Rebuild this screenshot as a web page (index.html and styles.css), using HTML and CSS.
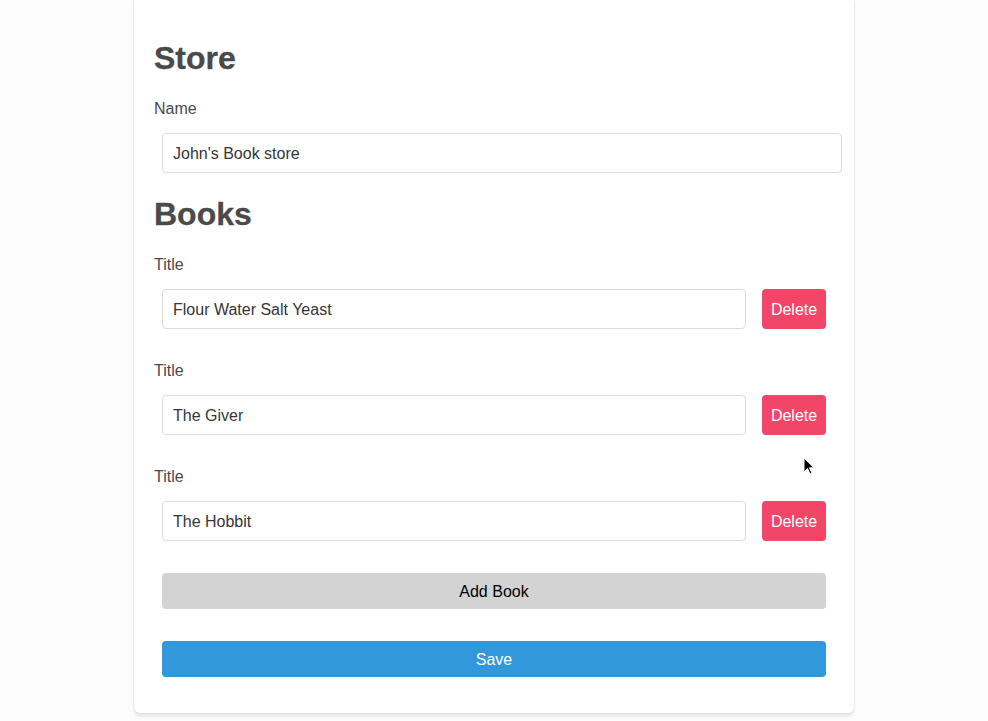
FILE: index.html
```html
<!DOCTYPE html>
<html>
<head>
<meta charset="utf-8">
<link rel="stylesheet" href="styles.css">
</head>
<body>
<div class="page">
  <div class="card">
    <h2 class="heading">Store</h2>
    <label class="label">Name</label>
    <input class="input input-wide" value="John's Book store">
    <h2 class="heading heading-books">Books</h2>
    <div class="book">
      <label class="label">Title</label>
      <div class="row">
        <input class="input" value="Flour Water Salt Yeast">
        <button class="btn btn-delete">Delete</button>
      </div>
    </div>
    <div class="book">
      <label class="label">Title</label>
      <div class="row">
        <input class="input" value="The Giver">
        <button class="btn btn-delete">Delete</button>
      </div>
    </div>
    <div class="book">
      <label class="label">Title</label>
      <div class="row">
        <input class="input" value="The Hobbit">
        <button class="btn btn-delete">Delete</button>
      </div>
    </div>
    <button class="btn btn-add">Add Book</button>
    <button class="btn btn-save">Save</button>
  </div>
  <svg class="cursor" width="14" height="20" viewBox="0 0 14 20"><path d="M1 1 L1 15 L4.5 11.5 L7 17 L9 16 L6.5 10.8 L11 10.8 Z" fill="#000" stroke="#fff" stroke-width="1"/></svg>
</div>
</body>
</html>
```
FILE: styles.css
```css
* { box-sizing: border-box; }
html, body { margin: 0; padding: 0; }
body {
  background: #fcfcfc;
  font-family: "Liberation Sans", Arial, sans-serif;
  color: #4a4a4a;
  width: 988px;
  height: 721px;
  overflow: hidden;
}
.page { position: relative; height: 721px; }
.card {
  width: 720px;
  margin: 0 0 0 134px;
  position: relative;
  top: -4px;
  background: #fff;
  border-radius: 6px;
  box-shadow: 0 4px 3px rgba(10,10,10,0.07), 0 0 0 1px rgba(10,10,10,0.05);
  padding: 43px 20px 36px;
  display: flex;
  flex-direction: column;
  align-items: stretch;
}
.heading {
  margin: 0 0 20px;
  font-size: 32px;
  line-height: 38px;
  font-weight: bold;
  color: #4a4a4a;
  -webkit-text-stroke: 0.3px #4a4a4a;
}
.heading-books { margin-top: 22px; margin-bottom: 20px; }
.label {
  display: block;
  font-size: 16px;
  line-height: 24px;
  color: #4a4a4a;
  margin-bottom: 12px;
}
.input {
  height: 40px;
  border: 1px solid #dbdbdb;
  border-radius: 4px;
  padding: 2px 10px 0;
  font-family: "Liberation Sans", Arial, sans-serif;
  font-size: 16px;
  color: #363636;
  background: #fff;
  outline: none;
}
.input-wide {
  width: 680px;
  margin-left: 8px;
  flex: none;
}
.book { margin-bottom: 30px; }
.book:last-of-type { margin-bottom: 32px; }
.row {
  display: flex;
  gap: 16px;
  margin: 0 8px;
}
.row .input { flex: 1; }
.btn {
  border: none;
  border-radius: 4px;
  font-family: "Liberation Sans", Arial, sans-serif;
  font-size: 16px;
  cursor: pointer;
  padding: 2px 0 0;
}
.btn-delete {
  width: 64px;
  height: 40px;
  background: #f14668;
  color: #fff;
}
.btn-add {
  margin: 0 8px 32px;
  height: 36px;
  background: #d3d3d3;
  color: #000;
}
.btn-save {
  margin: 0 8px;
  height: 36px;
  background: #3298dc;
  color: #fff;
}
.cursor {
  position: absolute;
  left: 803px;
  top: 457px;
}
```
